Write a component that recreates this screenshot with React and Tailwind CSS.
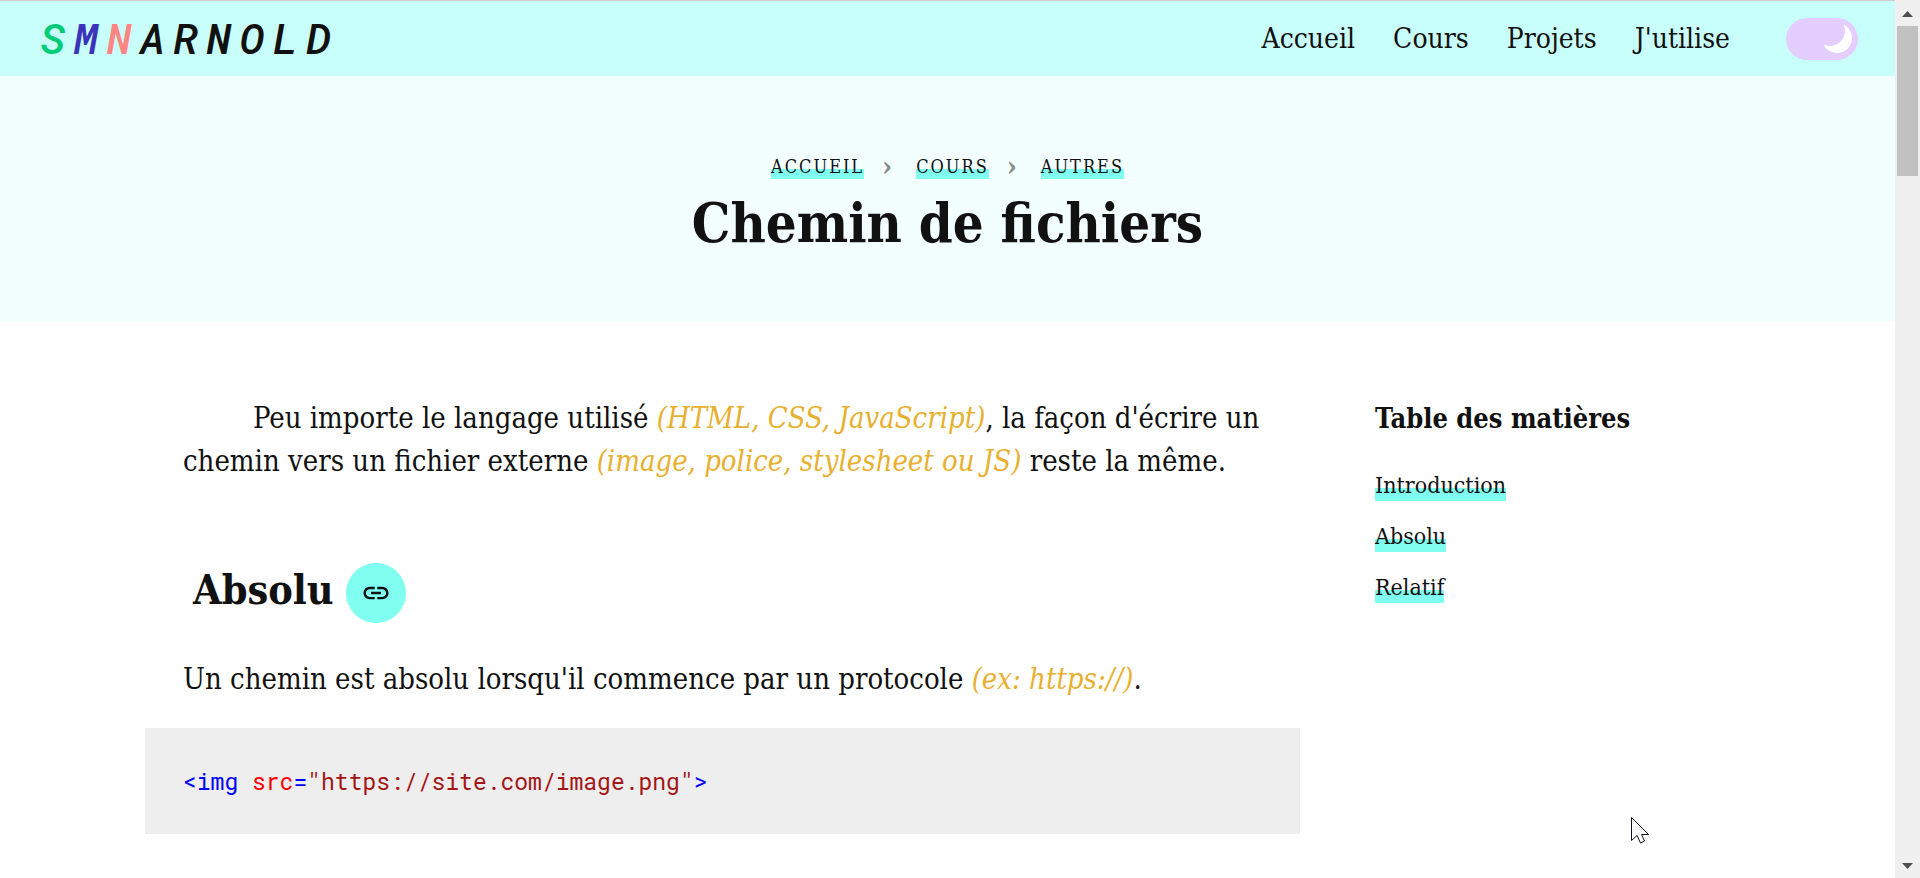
const navLinks = ['Accueil', 'Cours', 'Projets', "J'utilise"];
const crumbs = ['Accueil', 'Cours', 'Autres'];
const toc = [
    { id: 'introduction', label: 'Introduction' },
    { id: 'absolu', label: 'Absolu' },
    { id: 'relatif', label: 'Relatif' },
];

function Logo() {
    return (
        <a
            href="#"
            className="pb-[3px] font-['Roboto_Mono','DejaVu_Sans_Mono',monospace] text-[43px] leading-none font-medium italic tracking-[8px]"
        >
            <span className="text-[#00cc77]">S</span>
            <span className="text-[#3c34b8]">M</span>
            <span className="text-[#ff8585]">N</span>ARNOLD
        </a>
    );
}

function ThemeToggle() {
    return (
        <button type="button" aria-label="Mode sombre" className="flex h-[42px] w-[72px] items-center justify-end rounded-full bg-[#e4ceff] pr-[5px]">
            <svg width="30" height="30" viewBox="0 0 30 30" fill="#fff">
                <path d="M20.500 .5A15 15 0 1 1 .5 20.500A15 15 0 0 0 20.500 .5Z" />
            </svg>
        </button>
    );
}

function Header() {
    return (
        <header className="flex h-[76px] items-center justify-between border-t border-[#d5c8cf] bg-[#c9fffa] pr-[37px] pl-10">
            <Logo />
            <div className="flex items-center gap-14">
                <nav className="flex gap-[38px] text-[28px]">
                    {navLinks.map((link) => (
                        <a key={link} href="#">{link}</a>
                    ))}
                </nav>
                <ThemeToggle />
            </div>
        </header>
    );
}

function Hero() {
    return (
        <section className="flex flex-col items-center bg-[#f2fffe] pt-[79px] pb-[60px]">
            <ol className="flex items-center text-[18px] leading-6 tracking-[2px] uppercase">
                {crumbs.map((crumb, i) => (
                    <li key={crumb} className="flex items-center">
                        {i > 0 && <span className="w-[52px] pr-1 text-center text-[28px] leading-6 font-bold text-[#888]">›</span>}
                        <a href="#" className="bg-linear-to-b from-transparent from-60% to-[#80fff0] to-60%">{crumb}</a>
                    </li>
                ))}
            </ol>
            <h1 className="mt-[7px] text-[54px] leading-[75px] font-bold">Chemin de fichiers</h1>
        </section>
    );
}

function Note({ children }) {
    return <em className="text-[#e8b030]">{children}</em>;
}

function LinkIcon() {
    return (
        <svg width="30" height="30" viewBox="0 0 24 24" fill="currentColor">
            <path d="M3.900 12c0-1.710 1.390-3.100 3.100-3.100h4V7H7c-2.760 0-5 2.240-5 5s2.240 5 5 5h4v-1.900H7c-1.710 0-3.100-1.390-3.100-3.100zM8 13h8v-2H8v2zm9-6h-4v1.900h4c1.710 0 3.100 1.390 3.100 3.100s-1.390 3.100-3.100 3.100h-4V17h4c2.760 0 5-2.240 5-5s-2.240-5-5-5z" />
        </svg>
    );
}

function Article() {
    return (
        <main className="min-w-0 flex-1">
            <div className="px-[38px] text-[29px] leading-[43px]">
                <p id="introduction" className="indent-[70px]">
                    Peu importe le langage utilisé <Note>(HTML, CSS, JavaScript)</Note>, la façon d'écrire un chemin vers
                    un fichier externe <Note>(image, police, stylesheet ou JS)</Note> reste la même.
                </p>
                <div className="mt-20 flex items-center gap-3 pl-[10px]">
                    <h2 id="absolu" className="pb-[6px] text-[41px] leading-[54px] font-bold">Absolu</h2>
                    <a href="#absolu" aria-label="Lien vers Absolu" className="flex size-[60px] items-center justify-center rounded-full bg-[#80fff0]">
                        <LinkIcon />
                    </a>
                </div>
                <p className="mt-[35px]">
                    Un chemin est absolu lorsqu'il commence par un protocole <Note>(ex: https://)</Note>.
                </p>
            </div>
            <pre className="mt-[27px] bg-[#eee] px-[38px] py-9 text-[23px] leading-[34px]">
                <code className="block font-['Roboto_Mono','DejaVu_Sans_Mono',monospace] text-[#0000ff]">
                    &lt;img <span className="text-[#ff0000]">src</span>=
                    <span className="text-[#a31515]">"https://site.com/image.png"</span>&gt;
                </code>
            </pre>
        </main>
    );
}

function Toc() {
    return (
        <aside className="w-[375px] shrink-0">
            <h3 className="text-[27px] leading-[43px] font-bold">Table des matières</h3>
            <ul className="mt-5 text-[23px] leading-[51px]">
                {toc.map(({ id, label }) => (
                    <li key={id}>
                        <a href={`#${id}`} className="bg-linear-to-b from-transparent from-55% to-[#80fff0] to-55% pb-[3px]">{label}</a>
                    </li>
                ))}
            </ul>
        </aside>
    );
}

function Scrollbar() {
    return (
        <div aria-hidden="true" className="flex w-[25px] shrink-0 flex-col items-center bg-[#f0f0f0] pt-[11px] pb-[9px]">
            <svg width="11" height="6" fill="#505050"><path d="M0 6L5.500 0L11 6Z" /></svg>
            <div className="mt-[9px] h-[150px] w-[21px] bg-[#c1c1c1]" />
            <svg className="mt-auto" width="11" height="6" fill="#505050"><path d="M0 0L5.500 6L11 0Z" /></svg>
        </div>
    );
}

function Cursor() {
    return (
        <svg className="absolute top-[816px] left-[1631px]" width="20" height="29" viewBox="0 0 20 29" fill="#fff" stroke="#112" strokeWidth="1">
            <path d="M.5 1.500V24.500L6 19.500L9.500 27L13.500 25L10.500 18.500H17.500Z" />
        </svg>
    );
}

export default function App() {
    return (
        <div className="flex h-screen overflow-hidden bg-white font-['DejaVu_Serif_Condensed','DejaVu_Serif',serif] text-[#111]">
            <div className="min-w-0 flex-1">
                <Header />
                <Hero />
                <div className="flex gap-[75px] px-[145px] pt-[76px]">
                    <Article />
                    <Toc />
                </div>
            </div>
            <Scrollbar />
            <Cursor />
        </div>
    );
}
